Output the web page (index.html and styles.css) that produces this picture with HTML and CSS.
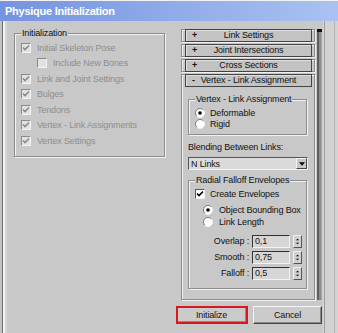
FILE: index.html
```html
<!DOCTYPE html>
<html>
<head>
<meta charset="utf-8">
<link rel="stylesheet" href="styles.css">
</head>
<body>
<div class="window">
  <div class="titlebar">Physique Initialization</div>
  <div class="client">
    <div class="left-pane">
      <fieldset class="group init-group">
        <legend>Initialization</legend>
        <div class="opt disabled"><span class="chk"><svg viewBox="0 0 8 8"><path d="M1 3.5 L3 5.5 L7 1.5"/></svg></span>Initial Skeleton Pose</div>
        <div class="opt disabled sub"><span class="chk"></span>Include New Bones</div>
        <div class="opt disabled"><span class="chk"><svg viewBox="0 0 8 8"><path d="M1 3.5 L3 5.5 L7 1.5"/></svg></span>Link and Joint Settings</div>
        <div class="opt disabled"><span class="chk"><svg viewBox="0 0 8 8"><path d="M1 3.5 L3 5.5 L7 1.5"/></svg></span>Bulges</div>
        <div class="opt disabled"><span class="chk"><svg viewBox="0 0 8 8"><path d="M1 3.5 L3 5.5 L7 1.5"/></svg></span>Tendons</div>
        <div class="opt disabled"><span class="chk"><svg viewBox="0 0 8 8"><path d="M1 3.5 L3 5.5 L7 1.5"/></svg></span>Vertex - Link Assignments</div>
        <div class="opt disabled"><span class="chk"><svg viewBox="0 0 8 8"><path d="M1 3.5 L3 5.5 L7 1.5"/></svg></span>Vertex Settings</div>
      </fieldset>
    </div>
    <div class="right-pane">
      <div class="rollup-row">
        <div class="rollup">
          <div class="rollout"><div class="rollout-btn"><span class="sign">+</span><span>Link Settings</span></div></div>
          <div class="rollout"><div class="rollout-btn"><span class="sign">+</span><span>Joint Intersections</span></div></div>
          <div class="rollout"><div class="rollout-btn"><span class="sign">+</span><span>Cross Sections</span></div></div>
          <div class="rollout open">
            <div class="rollout-btn"><span class="sign">-</span><span>Vertex - Link Assignment</span></div>
            <div class="rollout-body">
              <fieldset class="group vla">
                <legend>Vertex - Link Assignment</legend>
                <div class="opt"><svg class="radio" viewBox="0 0 10 10"><circle cx="5" cy="5" r="4.5" fill="#fff"/><path d="M1.8 8.2 A4.5 4.5 0 0 1 8.2 1.8" stroke="#7a7a7a" fill="none"/><path d="M8.2 1.8 A4.5 4.5 0 0 1 1.8 8.2" stroke="#f4f4f4" fill="none"/><circle cx="5" cy="5" r="1.8" fill="#000"/></svg>Deformable</div>
                <div class="opt"><svg class="radio" viewBox="0 0 10 10"><circle cx="5" cy="5" r="4.5" fill="#fff"/><path d="M1.8 8.2 A4.5 4.5 0 0 1 8.2 1.8" stroke="#7a7a7a" fill="none"/><path d="M8.2 1.8 A4.5 4.5 0 0 1 1.8 8.2" stroke="#f4f4f4" fill="none"/></svg>Rigid</div>
              </fieldset>
              <div class="label">Blending Between Links:</div>
              <div class="dropdown"><span class="dd-text">N Links</span><span class="dd-btn"><svg viewBox="0 0 7 4"><path d="M0 0 H7 L3.5 4 Z"/></svg></span></div>
              <fieldset class="group rfe">
                <legend>Radial Falloff Envelopes</legend>
                <div class="opt ce"><span class="chk active"><svg viewBox="0 0 8 8"><path d="M1 3.5 L3 5.5 L7 1.5"/></svg></span>Create Envelopes</div>
                <div class="opt ind first-radio"><svg class="radio" viewBox="0 0 10 10"><circle cx="5" cy="5" r="4.5" fill="#fff"/><path d="M1.8 8.2 A4.5 4.5 0 0 1 8.2 1.8" stroke="#7a7a7a" fill="none"/><path d="M8.2 1.8 A4.5 4.5 0 0 1 1.8 8.2" stroke="#f4f4f4" fill="none"/><circle cx="5" cy="5" r="1.8" fill="#000"/></svg>Object Bounding Box</div>
                <div class="opt ind"><svg class="radio" viewBox="0 0 10 10"><circle cx="5" cy="5" r="4.5" fill="#fff"/><path d="M1.8 8.2 A4.5 4.5 0 0 1 8.2 1.8" stroke="#7a7a7a" fill="none"/><path d="M8.2 1.8 A4.5 4.5 0 0 1 1.8 8.2" stroke="#f4f4f4" fill="none"/></svg>Link Length</div>
                <div class="spin-rows">
                  <div class="spin-row"><span class="spin-label">Overlap :</span><span class="field">0,1</span><span class="spinner"><svg viewBox="0 0 9 13"><path d="M2.5 5 L4.5 3 L6.5 5 Z M2.5 8 L4.5 10 L6.5 8 Z"/></svg></span></div>
                  <div class="spin-row"><span class="spin-label">Smooth :</span><span class="field">0,75</span><span class="spinner"><svg viewBox="0 0 9 13"><path d="M2.5 5 L4.5 3 L6.5 5 Z M2.5 8 L4.5 10 L6.5 8 Z"/></svg></span></div>
                  <div class="spin-row"><span class="spin-label">Falloff :</span><span class="field">0,5</span><span class="spinner"><svg viewBox="0 0 9 13"><path d="M2.5 5 L4.5 3 L6.5 5 Z M2.5 8 L4.5 10 L6.5 8 Z"/></svg></span></div>
                </div>
              </fieldset>
            </div>
          </div>
        </div>
        <div class="scrollbar"></div>
      </div>
      <div class="buttons">
        <div class="focus-ring"><div class="btn">Initialize</div></div>
        <div class="btn cancel">Cancel</div>
      </div>
    </div>
    <div class="right-edge"></div>
  </div>
</div>
</body>
</html>
```

FILE: styles.css
```css
* { box-sizing: border-box; }
html, body { margin: 0; padding: 0; }
body {
  width: 338px;
  height: 333px;
  overflow: hidden;
  background: #c8c8c8;
  font-family: "Liberation Sans", Arial, sans-serif;
  font-size: 9px;
  letter-spacing: -0.15px;
  color: #111;
}
.window {
  display: flex;
  flex-direction: column;
  height: 333px;
  border-top: 1px solid #f2f2f2;
}
.titlebar {
  height: 20px;
  line-height: 20px;
  padding-left: 5px;
  background: linear-gradient(to right, #7593e0, #a9c2f1);
  color: #fff;
  font-weight: bold;
  font-size: 11px;
  letter-spacing: -0.25px;
}
.client {
  flex: 1;
  display: flex;
  background: linear-gradient(to right, #c2c2c2 0 2px, #6e6e6e 2px 3px, #f2f2f2 3px 5px, #d6d6d6 5px 7px, #c8c8c8 7px);
}
.left-pane {
  width: 172px;
  padding: 7px 0 0 14px;
}
.group {
  margin: 0;
  min-width: 0;
  border: 1px solid #8c8c8c;
  box-shadow: 1px 1px 0 #f2f2f2, inset 1px 1px 0 #f2f2f2;
}
.group legend {
  padding: 0 1px;
  line-height: 11px;
  background: #c8c8c8;
}
.init-group {
  width: 151px;
  padding: 1px 0 7px 6px;
}
.opt {
  display: flex;
  align-items: center;
  white-space: nowrap;
}
.init-group .opt { height: 15.5px; }
.disabled { color: #8e8e8e; }
.opt.sub { padding-left: 16px; }
.chk {
  width: 10px;
  height: 10px;
  margin-right: 6px;
  flex: none;
  border-top: 1px solid #8a8a8a;
  border-left: 1px solid #8a8a8a;
  border-right: 1px solid #f4f4f4;
  border-bottom: 1px solid #f4f4f4;
  background: #e2e2e2;
  display: flex;
}
.chk svg {
  width: 8px;
  height: 8px;
  fill: none;
  stroke: #8a8a8a;
  stroke-width: 1.6;
}
.chk.active {
  background: #fff;
  border-top-color: #555;
  border-left-color: #555;
  margin-right: 5px;
}
.chk.active svg { stroke: #000; }
.radio {
  width: 10px;
  height: 10px;
  flex: none;
  margin-right: 5px;
}

/* right side */
.right-pane {
  width: 151px;
  padding-top: 8px;
  display: flex;
  flex-direction: column;
}
.rollup-row {
  display: flex;
  gap: 2px;
  margin-left: 9px;
}
.rollup {
  width: 134px;
  display: flex;
  flex-direction: column;
  gap: 2px;
}
.rollout {
  border: 1px solid #8c8c8c;
  box-shadow: 1px 1px 0 #f0f0f0, inset 1px 1px 0 #f0f0f0;
}
.rollout-btn {
  height: 13px;
  margin: -1px 2px -1px 3px;
  border: 1px solid #444;
  background: #c3c3c3;
  box-shadow: inset 1px 1px 0 #dedede;
  display: grid;
  grid-template-columns: 1fr auto 1fr;
  align-items: center;
  line-height: 11px;
  color: #111;
}
.rollout-btn .sign {
  justify-self: start;
  padding-left: 6px;
  font-weight: bold;
}
.rollout-body {
  padding: 0 7px 10px 6px;
}
.vla {
  margin-top: 8px;
  padding: 2px 0 5px 6px;
}
.vla .opt { height: 11px; }
.label {
  margin-top: 7px;
  line-height: 11px;
}
.dropdown {
  margin-top: 4px;
  margin-right: -1px;
  height: 13px;
  display: flex;
  align-items: center;
  background: #dadada;
  border-top: 1px solid #555;
  border-left: 1px solid #555;
  border-right: 1px solid #f2f2f2;
  border-bottom: 1px solid #f2f2f2;
  padding-left: 2px;
}
.dd-text { flex: 1; }
.dd-btn {
  width: 11px;
  height: 11px;
  background: #c8c8c8;
  border-top: 1px solid #f4f4f4;
  border-left: 1px solid #f4f4f4;
  border-right: 1px solid #444;
  border-bottom: 1px solid #444;
  display: flex;
  align-items: center;
  justify-content: center;
}
.dd-btn svg { width: 6px; height: 4px; fill: #000; }
.rfe {
  margin-top: 5px;
  padding: 2px 0 7px 6px;
}
.rfe .opt { height: 12px; }
.rfe .first-radio { margin-top: 4px; }
.rfe .ind { padding-left: 8px; }
.rfe .ind .radio { margin-right: 6px; }
.spin-rows { margin-top: 5px; }
.spin-row {
  height: 16px;
  display: flex;
  align-items: center;
}
.spin-label {
  width: 54px;
  text-align: right;
  margin-right: 3px;
}
.field {
  width: 38px;
  height: 13px;
  line-height: 11px;
  padding-left: 2px;
  background: #d6d6d6;
  border-top: 1px solid #333;
  border-left: 1px solid #333;
  border-right: 1px solid #f2f2f2;
  border-bottom: 1px solid #f2f2f2;
  margin-right: 3px;
}
.spinner {
  width: 9px;
  height: 13px;
  background: #cfcfcf;
  border-top: 1px solid #f2f2f2;
  border-left: 1px solid #f2f2f2;
  border-right: 1px solid #555;
  border-bottom: 1px solid #555;
  display: flex;
}
.spinner svg { width: 7px; height: 11px; fill: #000; }
.scrollbar {
  width: 5px;
  border-top: 3px solid #111;
  background: linear-gradient(to right, #5e5e5e 0 2px, #8c8c8c 2px 4px, #aaaaaa 4px);
}
.buttons {
  display: flex;
  gap: 5px;
  margin-top: 6px;
  margin-left: 4px;
}
.focus-ring {
  width: 72px;
  height: 18px;
  border: 2px solid #d8171e;
}
.btn {
  height: 100%;
  display: flex;
  align-items: center;
  justify-content: center;
  background: #cbcbcb;
  color: #111;
}
.focus-ring .btn {
  border-right: 1px solid #8a8a8a;
  border-bottom: 1px solid #8a8a8a;
}
.cancel {
  width: 69px;
  height: 18px;
  border-top: 1px solid #f4f4f4;
  border-left: 1px solid #f4f4f4;
  border-right: 1px solid #444;
  border-bottom: 1px solid #444;
  box-shadow: inset -1px -1px 0 #8a8a8a;
}
.right-edge {
  flex: 1;
  background: linear-gradient(to right, #d8d8d8 0 1px, #9c9c9c 1px 2px, #d2d2d2 2px 11px, #b4b4b4 11px 12px, #d2d2d2 12px);
}
```
